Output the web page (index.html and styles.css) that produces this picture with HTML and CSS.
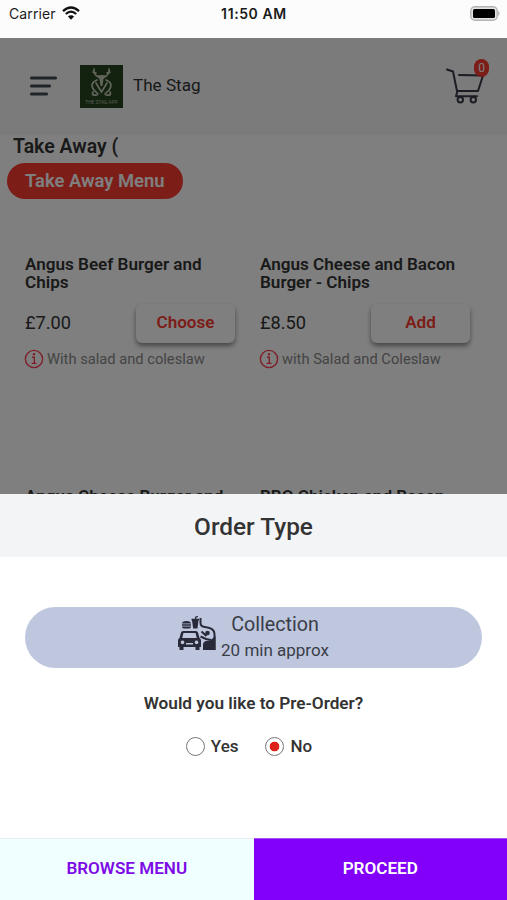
FILE: index.html
```html
<!DOCTYPE html>
<html lang="en">
<head>
    <meta charset="utf-8">
    <title>The Stag</title>
    <link rel="stylesheet" href="styles.css">
</head>
<body>
    <div class="phone">
        <div class="status-bar">
            <div class="carrier">
                <span>Carrier</span>
                <svg width="18" height="14" viewBox="0 0 18 14" fill="none" stroke="#111" stroke-width="2.3">
                    <path d="M1 5.2Q9-2.2 17 5.2M3.8 8Q9 3.3 14.2 8"/>
                    <path d="M9 13.8L5.9 10.6Q9 8 12.1 10.6Z" fill="#111" stroke="none"/>
                </svg>
            </div>
            <div class="time">11:50 AM</div>
            <div class="battery">
                <svg width="31" height="15" viewBox="0 0 31 15">
                    <rect x=".8" y=".8" width="26.4" height="13.4" rx="4" fill="#e4e4e4" stroke="#b4b4b4" stroke-width="1.4"/>
                    <rect x="3" y="3" width="22" height="9" rx="1.6" fill="#000"/>
                    <path d="M28.3 4.8Q31 7.5 28.3 10.2Z" fill="#aaa"/>
                </svg>
            </div>
        </div>

        <div class="screen">
            <header class="header">
                <svg class="menu-icon" width="30" height="20" viewBox="0 0 30 20" stroke="#454856" stroke-width="3.2" stroke-linecap="round">
                    <path d="M3.500 2h24M3.500 10h18M3.500 18h15"/>
                </svg>
                <svg class="logo" width="43" height="43" viewBox="0 0 43 43">
                    <rect width="43" height="43" fill="#26441f"/>
                    <g fill="none" stroke="#c3cbb9" stroke-width="1.7" stroke-linecap="round">
                        <path d="M14 4q-1 6 5 8M16 8l-3-1M29 4q1 6-5 8M27 8l3-1"/>
                        <path d="M17 15q-8 3-3 10l4 4M26 15q8 3 3 10l-4 4M16 18l3 5 2.500 4 2.500-4 3-5"/>
                        <path d="M13 27q-2 4 4 3M30 27q2 4-4 3"/>
                    </g>
                    <path d="M16 11q5.500-2 11 0l-3.500 3-1 7h-2l-1-7z" fill="#c3cbb9"/>
                    <text class="logo-text" x="21.5" y="38.500" text-anchor="middle">THE STAG APP</text>
                </svg>
                <span class="brand">The Stag</span>
                <div class="cart">
                    <svg width="40" height="38" viewBox="0 0 40 38" fill="none" stroke="#383b48" stroke-width="2" stroke-linecap="round" stroke-linejoin="round">
                        <path d="M2 2.500l6 2L12 24h21l5-15.500L14 8"/>
                        <path d="M12.500 24l-1.500 5.300h21"/>
                        <circle cx="15.300" cy="32.800" r="2.700"/>
                        <circle cx="28.300" cy="32.800" r="2.700"/>
                    </svg>
                    <span class="badge">0</span>
                </div>
            </header>

            <h2 class="section-title">Take Away (</h2>
            <div class="category">Take Away Menu</div>

            <div class="products">
                <div class="product">
                    <h3>Angus Beef Burger and Chips</h3>
                    <div class="buy">
                        <span class="price">£7.00</span>
                        <button class="btn">Choose</button>
                    </div>
                    <p class="info">
                        <svg width="20" height="20" viewBox="0 0 20 20" fill="none" stroke="#fa4052" stroke-width="1.4">
                            <circle cx="10" cy="10" r="8.600"/>
                            <path d="M8 8.200h2.300v6M7.600 14.400h5" />
                            <circle cx="10" cy="5.300" r=".6"/>
                        </svg>
                        <span>With salad and coleslaw</span>
                    </p>
                </div>
                <div class="product">
                    <h3>Angus Cheese and Bacon Burger - Chips</h3>
                    <div class="buy">
                        <span class="price">£8.50</span>
                        <button class="btn">Add</button>
                    </div>
                    <p class="info">
                        <svg width="20" height="20" viewBox="0 0 20 20" fill="none" stroke="#fa4052" stroke-width="1.4">
                            <circle cx="10" cy="10" r="8.600"/>
                            <path d="M8 8.200h2.300v6M7.600 14.400h5" />
                            <circle cx="10" cy="5.300" r=".6"/>
                        </svg>
                        <span>with Salad and Coleslaw</span>
                    </p>
                </div>
                <div class="product">
                    <h3>Angus Cheese Burger and</h3>
                </div>
                <div class="product">
                    <h3>BBQ Chicken and Bacon</h3>
                </div>
            </div>
        </div>

        <div class="overlay">
            <div class="modal">
                <div class="modal-header">Order Type</div>
                <div class="modal-body">
                    <div class="order-type">
                        <svg width="38" height="35" viewBox="0 0 38 35" fill="#282a3a">
                            <path d="M4 7.500q0-2.500 4.500-2.500T13 7.500zM4 8.300h9v1.500H4zM4 10.500h9q0 2-2 2H6q-2 0-2-2z"/>
                            <path d="M13.500 2.800h3.300L17.300.500 20 0v1l-1.800.700-.2 1.100h3v1.700h-.6L19.500 12.500h-4.300L14 4.500h-.5z"/>
                            <path fill-rule="evenodd" d="M5 15h13q1.500 0 2 1.500L21.500 22q1.500.8 1.500 2.500V31h-1.500v3h-4v-3h-12v3h-4v-3H0v-6.500Q0 22.800 1.500 22L3 16.500Q3.500 15 5 15zm.5 2L4.200 22h14.600L17.500 17zM4.500 24.500a1.800 1.800 0 1 0 .1 0zM18.500 24.500a1.800 1.800 0 1 0 .1 0zM8 27v1.500h7V27z"/>
                            <path d="M22.500 2v5q0 3.500 4.500 4 9.500 1 9.500 7V34" fill="none" stroke="#282a3a" stroke-width="2"/>
                            <path d="M25 34v-5.500q0-2.500 3-3.500l4-.5L37.500 20v14z"/>
                            <path d="M23.500 15.500l5 4.500M22.500 20.500l5.500 2.500 5 1" fill="none" stroke="#282a3a" stroke-width="2"/>
                            <circle cx="29.500" cy="17" r="2.300"/>
                        </svg>
                        <div class="order-text">
                            <div class="order-name">Collection</div>
                            <div class="order-time">20 min approx</div>
                        </div>
                    </div>
                    <div class="question">Would you like to Pre-Order?</div>
                    <div class="radios">
                        <div class="radio"><span class="circle"></span><span>Yes</span></div>
                        <div class="radio checked"><span class="circle"></span><span>No</span></div>
                    </div>
                </div>
                <div class="modal-footer">
                    <div class="action browse">BROWSE MENU</div>
                    <div class="action proceed">PROCEED</div>
                </div>
            </div>
        </div>
    </div>
</body>
</html>
```
FILE: styles.css
```css
*{
    box-sizing: border-box;
}
body{
    margin: 0;
    font-family: Roboto, "Liberation Sans", sans-serif;
    color: #333;
}
h2, h3, p{
    margin: 0;
}
.phone{
    width: 507px;
    height: 900px;
    position: relative;
    overflow: hidden;
    background: #fff;
}

.status-bar{
    height: 38px;
    background: #fcfcfc;
    display: grid;
    grid-template-columns: 1fr auto 1fr;
    padding: 0 6px 0 9px;
    font-family: Inter, sans-serif;
    font-size: 14px;
    line-height: 28px;
    color: #1b1b1b;
}
.carrier{
    display: flex;
    gap: 6px;
    letter-spacing: 0.1px;
}
.carrier svg{
    margin-top: 6px;
}
.time{
    font-weight: 600;
    letter-spacing: 0.6px;
    margin-left: -2px;
}
.battery{
    display: flex;
    justify-content: flex-end;
}
.battery svg{
    margin-top: 6px;
}

.header{
    height: 97px;
    padding: 0 18px 1px 28px;
    display: flex;
    align-items: center;
    background: #f6f6f7;
}
.logo{
    margin: 0 10px 0 22px;
}
.logo-text{
    font-size: 4.8px;
    fill: #aeb8a5;
}
.brand{
    font-size: 17.1px;
    line-height: 20px;
    padding-bottom: 2px;
}
.cart{
    position: relative;
    margin-left: auto;
    width: 44px;
    height: 38px;
}
.badge{
    position: absolute;
    top: -8px;
    right: 0;
    width: 15px;
    height: 18px;
    border-radius: 8px;
    background: #f83a30;
    color: #fff;
    font-size: 12px;
    line-height: 18px;
    text-align: center;
}

.section-title{
    padding: 1px 0 0 13px;
    font-size: 19.5px;
    line-height: 22px;
    font-weight: 600;
}
.category{
    display: block;
    width: 176px;
    margin: 5px 0 0 7px;
    padding: 0 18px;
    height: 36px;
    line-height: 35px;
    border-radius: 18px;
    background: #f83a30;
    color: #fff;
    font-size: 18.4px;
    font-weight: 600;
    white-space: nowrap;
}
.products{
    display: grid;
    grid-template-columns: 211px 211px;
    grid-template-rows: 232px auto;
    column-gap: 24px;
    padding: 56px 0 0 25px;
}
.product h3{
    font-size: 17.1px;
    line-height: 18.4px;
    font-weight: 600;
}
.buy{
    display: flex;
    justify-content: space-between;
    align-items: center;
    margin-top: 12px;
    padding-right: 1px;
}
.price{
    font-size: 18.2px;
    padding-bottom: 2px;
}
.btn{
    width: 99px;
    height: 39px;
    border: 0;
    border-radius: 6px;
    background: #fff;
    box-shadow: 0 3px 5px rgba(0,0,0,0.45);
    color: #f83a30;
    font-family: inherit;
    font-size: 17.1px;
    line-height: 36px;
    padding: 0 0 2px;
    font-weight: 600;
}
.info{
    display: flex;
    align-items: center;
    gap: 3px;
    margin: 6px 0 0 -1px;
    color: #888;
    font-size: 14.7px;
    line-height: 20px;
}

.overlay{
    position: absolute;
    top: 38px;
    left: 0;
    right: 0;
    bottom: 0;
    display: flex;
    align-items: flex-end;
    background: rgba(0,0,0,0.5);
}
.modal{
    width: 100%;
    height: 406px;
    display: flex;
    flex-direction: column;
    background: #fff;
}
.modal-header{
    height: 63px;
    background: #f3f4f6;
    font-size: 24.4px;
    line-height: 65px;
    font-weight: 500;
    text-align: center;
}
.modal-body{
    flex: 1;
    padding: 50px 25px 0;
}
.order-type{
    height: 61px;
    border-radius: 31px;
    background: #bec7de;
    display: flex;
    justify-content: center;
    align-items: center;
    gap: 5px;
    padding-bottom: 1px;
    color: #3a3d48;
}
.order-type svg{
    margin-bottom: 8px;
}
.order-text{
    text-align: center;
}
.order-name{
    font-size: 19.7px;
    line-height: 26px;
}
.order-time{
    font-size: 17px;
    line-height: 24px;
}
.question{
    margin-top: 24px;
    font-size: 17.2px;
    line-height: 22px;
    font-weight: 600;
    text-align: center;
}
.radios{
    display: flex;
    justify-content: center;
    gap: 27px;
    margin-top: 22px;
    padding-right: 9px;
}
.radio{
    display: flex;
    align-items: center;
    gap: 6px;
    font-size: 17px;
    line-height: 20px;
    font-weight: 500;
}
.circle{
    width: 19px;
    height: 19px;
    border: 1px solid #777;
    border-radius: 50%;
}
.checked .circle{
    background: radial-gradient(circle, #dc2118 4.5px, #fff 5.2px);
}
.modal-footer{
    height: 62px;
    display: flex;
}
.action{
    flex: 1;
    border-top: 1px solid #e8edef;
    font-size: 17.1px;
    line-height: 59px;
    font-weight: 600;
    text-align: center;
}
.browse{
    background: #f0ffff;
    color: #7d0be6;
}
.proceed{
    background: #8200fa;
    border-top-color: #a850fb;
    color: #fff;
}
```
